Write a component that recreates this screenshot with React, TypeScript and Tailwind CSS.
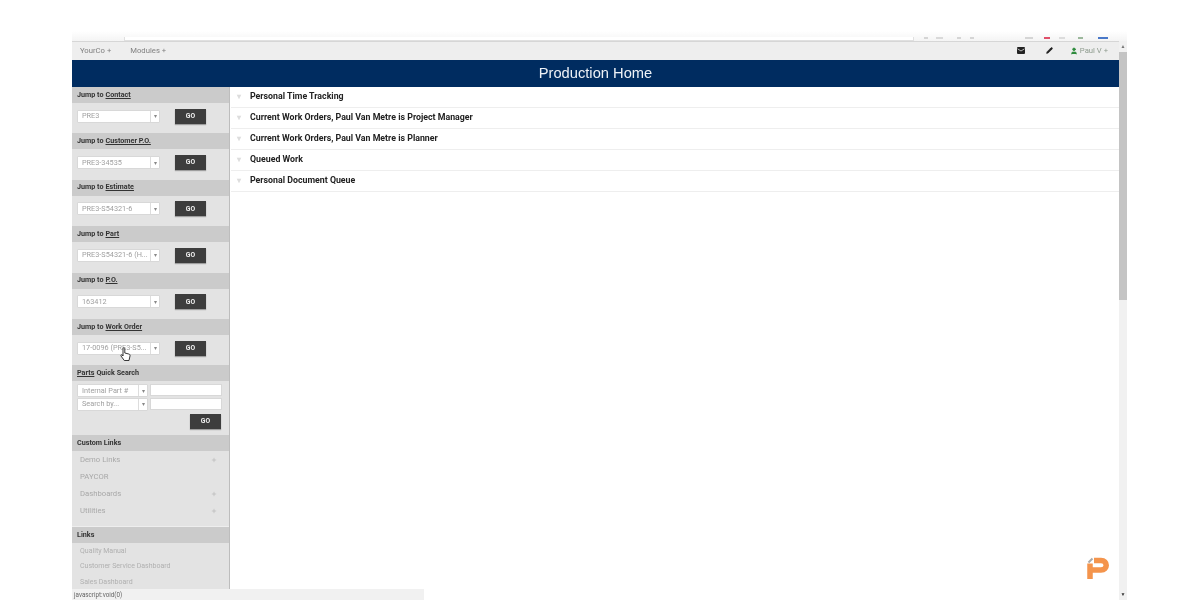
import { Pencil, Plus, User } from "lucide-react";

const jumps = [
  { pre: "Jump to ", link: "Contact", value: "PRE3" },
  { pre: "Jump to ", link: "Customer P.O.", value: "PRE3-34535" },
  { pre: "Jump to ", link: "Estimate", value: "PRE3-S54321-6" },
  { pre: "Jump to ", link: "Part", value: "PRE3-S54321-6 (H..." },
  { pre: "Jump to ", link: "P.O.", value: "163412" },
  { pre: "Jump to ", link: "Work Order", value: "17-0096 (PRE3-S5..." },
];

const work = [
  "Personal Time Tracking",
  "Current Work Orders, Paul Van Metre is Project Manager",
  "Current Work Orders, Paul Van Metre is Planner",
  "Queued Work",
  "Personal Document Queue",
];

const toolbarDots = [
  { left: "w-[4px] bg-[#d5d5d5]", gap: "ml-[10px]" },
  { left: "w-[7px] bg-[#d9d9d9]", gap: "ml-[8px]" },
  { left: "w-[4px] bg-[#d5d5d5]", gap: "ml-[14px]" },
  { left: "w-[4px] bg-[#d5d5d5]", gap: "ml-[9px]" },
  { left: "w-[8px] bg-[#d5d5d5]", gap: "ml-[51px]" },
  { left: "w-[6px] bg-[#e0506a]", gap: "ml-[11px]" },
  { left: "w-[6px] bg-[#dcdcdc]", gap: "ml-[9px]" },
  { left: "w-[5px] bg-[#9cb89c]", gap: "ml-[13px]" },
  { left: "w-[10px] bg-[#4a78c8]", gap: "ml-[15px]" },
];

function Arrow() {
  return <span className="text-[6px] leading-none text-[#888]">▾</span>;
}

function GoButton() {
  return (
    <button className="flex h-[15px] w-[31px] items-center justify-center bg-[#3d3d3d] text-[6.8px] font-bold text-[#eee] shadow-[0_1px_1px_rgba(0,0,0,0.3)]">
      GO
    </button>
  );
}

function SideHeader({ children }: { children: React.ReactNode }) {
  return (
    <div className="flex h-[16px] shrink-0 items-center bg-[#cbcbcb] pl-[5px] text-[7.2px] font-bold text-[#333]">
      {children}
    </div>
  );
}

function SmallSelect({ value, textW }: { value: string; textW: string }) {
  return (
    <div className="flex h-[13px] items-center rounded-[1px] border border-[#d8d8d8] bg-white">
      <span className={`${textW} overflow-hidden whitespace-nowrap pl-[4px] pt-[1px] text-[7.3px] text-[#a0a0a0]`}>{value}</span>
      <span className="flex h-full w-[9px] items-center justify-center border-l border-[#ddd]">
        <Arrow />
      </span>
    </div>
  );
}

export default function App() {
  return (
    <div className="relative h-[600px] w-[1200px] overflow-hidden bg-white font-['Roboto',sans-serif] blur-[0.4px]">
      <div className="flex h-full flex-col pl-[72px] pr-[73px] pt-[31px]">
        <div className="flex h-[10px] shrink-0 items-end bg-gradient-to-b from-white to-[#f4f4f4]">
          <div className="ml-[52px] h-[4px] w-[790px] border-b border-l border-r border-[#e0e0e0] bg-white" />
          <div className="mb-[2px] flex h-[3px] items-center">
            {toolbarDots.map((d, i) => (
              <span key={i} className={`h-[2px] ${d.left} ${d.gap}`} />
            ))}
          </div>
        </div>
        <div className="flex min-h-0 flex-1">
          <div className="flex min-w-0 flex-1 flex-col">
            <div className="flex h-[19px] shrink-0 items-center justify-between border-t border-[#d6d6d6] bg-[#eeeeee] pl-[8px] pr-[11px] text-[7.7px] text-[#808080]">
              <div className="flex gap-[19px]">
                <span>YourCo +</span>
                <span>Modules +</span>
              </div>
              <div className="flex items-center">
                <svg width="8" height="7" viewBox="0 0 8 7">
                  <rect width="8" height="7" rx="1" fill="#222" />
                  <path d="M0.5 1.8 L4 4 L7.5 1.8" fill="none" stroke="#ddd" strokeWidth="0.8" />
                </svg>
                <Pencil size={7} fill="#222" stroke="#222" className="ml-[21px]" />
                <User size={8} fill="#2e8b3d" stroke="#2e8b3d" className="ml-[17px]" />
                <span className="ml-[2px] text-[#8f9c8f]">Paul V +</span>
              </div>
            </div>
            <div className="flex h-[27px] shrink-0 items-center justify-center bg-[#002c60] font-['Liberation_Sans',sans-serif] text-[14.7px] text-[#eef2f7]">
              Production Home
            </div>
            <div className="flex min-h-0 flex-1">
              <aside className="flex w-[158px] shrink-0 flex-col overflow-hidden border-r border-[#bdbdbd] bg-[#e3e3e3]">
                {jumps.map((j) => (
                  <div key={j.link} className="h-[46.4px] shrink-0">
                    <SideHeader>
                      {j.pre}
                      <span className="ml-[2px] underline">{j.link}</span>
                    </SideHeader>
                    <div className="flex h-[30.4px] items-center pb-[4px] pl-[5px]">
                      <SmallSelect value={j.value} textW="w-[72px]" />
                      <div className="ml-[15px]">
                        <GoButton />
                      </div>
                    </div>
                  </div>
                ))}
                <SideHeader>
                  <span className="underline">Parts</span>
                  <span className="ml-[2px]">Quick Search</span>
                </SideHeader>
                <div className="flex h-[54px] shrink-0 flex-col pl-[5px] pr-[7px] pt-[3px]">
                  <div className="flex gap-[2px]">
                    <SmallSelect value="Internal Part #" textW="w-[60px]" />
                    <div className="h-[12px] flex-1 border border-[#d8d8d8] bg-white" />
                  </div>
                  <div className="mt-[0.5px] flex gap-[2px]">
                    <SmallSelect value="Search by..." textW="w-[60px]" />
                    <div className="h-[12px] flex-1 border border-[#d8d8d8] bg-white" />
                  </div>
                  <div className="mt-[3px] flex justify-end pr-[1px]">
                    <GoButton />
                  </div>
                </div>
                <SideHeader>Custom Links</SideHeader>
                <div className="h-[76px] shrink-0 border-b border-[#eeeeee] pl-[8px] pr-[12px] text-[7.7px] text-[#a8a8a8]">
                  {["Demo Links", "PAYCOR", "Dashboards", "Utilities"].map((l) => (
                    <div key={l} className="flex h-[17px] items-center justify-between">
                      {l}
                      {l !== "PAYCOR" && <Plus size={6} stroke="#aaa" />}
                    </div>
                  ))}
                </div>
                <SideHeader>Links</SideHeader>
                <div className="pl-[8px] text-[7px] text-[#b0b0b0]">
                  {["Quality Manual", "Customer Service Dashboard", "Sales Dashboard"].map((l) => (
                    <div key={l} className="flex h-[15.5px] items-center">
                      {l}
                    </div>
                  ))}
                </div>
              </aside>
              <main className="min-w-0 flex-1 pl-px">
                {work.map((w) => (
                  <div key={w} className="flex h-[21px] items-center border-b border-[#eeeeee] pl-[6px] text-[8.8px] font-bold text-[#222]">
                    <span className="w-[13px] text-[8px] text-[#ddd]">▾</span>
                    {w}
                  </div>
                ))}
              </main>
            </div>
          </div>
          <div className="flex w-[8px] shrink-0 flex-col items-center bg-[#f1f1f1]">
            <span className="h-[11px] text-[5px] leading-[11px] text-[#777]">▲</span>
            <div className="h-[248px] w-full bg-[#c4c4c4]" />
            <div className="flex-1" />
            <span className="h-[11px] text-[5px] leading-[11px] text-[#333]">▼</span>
          </div>
        </div>
      </div>

      <div className="absolute bottom-0 left-[72px] flex h-[11px] w-[352px] items-center bg-[#f1f1f1] pl-[2px] pt-[3px] text-[6.3px] text-[#666]">
        javascript:void(0)
      </div>

      <svg className="absolute left-[1087px] top-[557px]" width="23" height="23" viewBox="0 0 23 23">
        <path d="M1.5 5.5 L5.5 1.5" stroke="#a9a9a9" strokeWidth="2" />
        <path d="M7 3.5 H14 C21 3.5 21 13 14 13 H3 V22 M3 6.5 V13" fill="none" stroke="#f4944c" strokeWidth="5.5" />
      </svg>

      <svg className="absolute left-[120px] top-[347px]" width="11" height="15" viewBox="0 0 11 15">
        <path d="M3 1.5 C3 .5 4.8 .5 4.8 1.5 V6 L8.8 7 C10 7.4 10.2 8 10 9 L9 13.5 H4.3 L1 9 C.5 8 1.6 7.4 2.3 8 L3 9 Z" fill="#fff" stroke="#222" strokeWidth="0.9" />
      </svg>
    </div>
  );
}
